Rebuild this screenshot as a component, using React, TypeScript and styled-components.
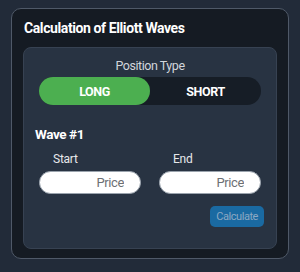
import React, { useState } from "react";
import styled, { createGlobalStyle } from "styled-components";

const GlobalStyle = createGlobalStyle`
  html, body {
    margin: 0;
    padding: 0;
    background: #222b39;
    font-family: Roboto, "Liberation Sans", sans-serif;
  }
`;

const Page = styled.div`
  width: 300px;
  height: 272px;
  box-sizing: border-box;
  padding: 8px 11px 12px 11px;
`;

const Card = styled.div`
  height: 251px;
  box-sizing: border-box;
  background: #151b23;
  border: 1px solid #4f5968;
  border-radius: 10px;
  padding: 0 11px 9px 11px;
  display: flex;
  flex-direction: column;
`;

const Title = styled.h2`
  margin: 0;
  padding: 10px 0 10px 1px;
  font-size: 14px;
  font-weight: 700;
  letter-spacing: -0.4px;
  color: #ffffff;
  line-height: 18px;
`;

const Panel = styled.div`
  flex: 1;
  background: #283342;
  border: 1px solid #374252;
  border-radius: 8px;
  padding: 10px 15px 0 15px;
  display: flex;
  flex-direction: column;
`;

const Label = styled.div`
  text-align: center;
  font-size: 12.5px;
  letter-spacing: -0.45px;
  color: #d2d6dc;
  line-height: 16px;
`;

const Toggle = styled.div`
  margin-top: 3px;
  height: 28px;
  border-radius: 14px;
  background: #161d26;
  display: grid;
  grid-template-columns: 1fr 1fr;
`;

const ToggleButton = styled.button<{ $active: boolean }>`
  border: none;
  border-radius: 14px;
  background: ${(p) => (p.$active ? "#4caf50" : "transparent")};
  color: #ffffff;
  font-family: inherit;
  font-size: 12.5px;
  font-weight: 700;
  letter-spacing: -0.4px;
  cursor: pointer;
  padding: 0;
`;

const WaveTitle = styled.div`
  margin-top: 20px;
  margin-left: -4px;
  font-size: 13.5px;
  font-weight: 700;
  letter-spacing: -0.4px;
  color: #ffffff;
  line-height: 18px;
`;

const Fields = styled.div`
  margin-top: 9px;
  display: grid;
  grid-template-columns: 1fr 1fr;
  gap: 18px;
`;

const Field = styled.div`
  display: flex;
  flex-direction: column;
`;

const FieldLabel = styled.div`
  padding-left: 14px;
  font-size: 12px;
  letter-spacing: -0.25px;
  color: #e6e8eb;
  line-height: 15px;
`;

const Input = styled.input`
  margin-top: 4px;
  height: 23px;
  box-sizing: border-box;
  border: 1px solid #9aa3ad;
  border-radius: 12px;
  background: #ffffff;
  text-align: right;
  padding: 0 16px;
  font-family: inherit;
  font-size: 13px;
  letter-spacing: -0.4px;
  width: 100%;
  &::placeholder {
    color: #6d7074;
  }
`;

const Actions = styled.div`
  margin-top: 12px;
  margin-right: -3px;
  display: flex;
  justify-content: flex-end;
`;

const CalcButton = styled.button`
  height: 21px;
  padding: 0 6px;
  border: none;
  border-radius: 5px;
  background: #1a6aa2;
  color: #8ca8c2;
  font-family: inherit;
  font-size: 11px;
  letter-spacing: -0.45px;
`;

export default function App() {
  const [side, setSide] = useState<"long" | "short">("long");
  return (
    <>
      <GlobalStyle />
      <Page>
        <Card>
          <Title>Calculation of Elliott Waves</Title>
          <Panel>
            <Label>Position Type</Label>
            <Toggle>
              <ToggleButton $active={side === "long"} onClick={() => setSide("long")}>
                LONG
              </ToggleButton>
              <ToggleButton $active={side === "short"} onClick={() => setSide("short")}>
                SHORT
              </ToggleButton>
            </Toggle>
            <WaveTitle>Wave #1</WaveTitle>
            <Fields>
              <Field>
                <FieldLabel>Start</FieldLabel>
                <Input placeholder="Price" />
              </Field>
              <Field>
                <FieldLabel>End</FieldLabel>
                <Input placeholder="Price" />
              </Field>
            </Fields>
            <Actions>
              <CalcButton disabled>Calculate</CalcButton>
            </Actions>
          </Panel>
        </Card>
      </Page>
    </>
  );
}
